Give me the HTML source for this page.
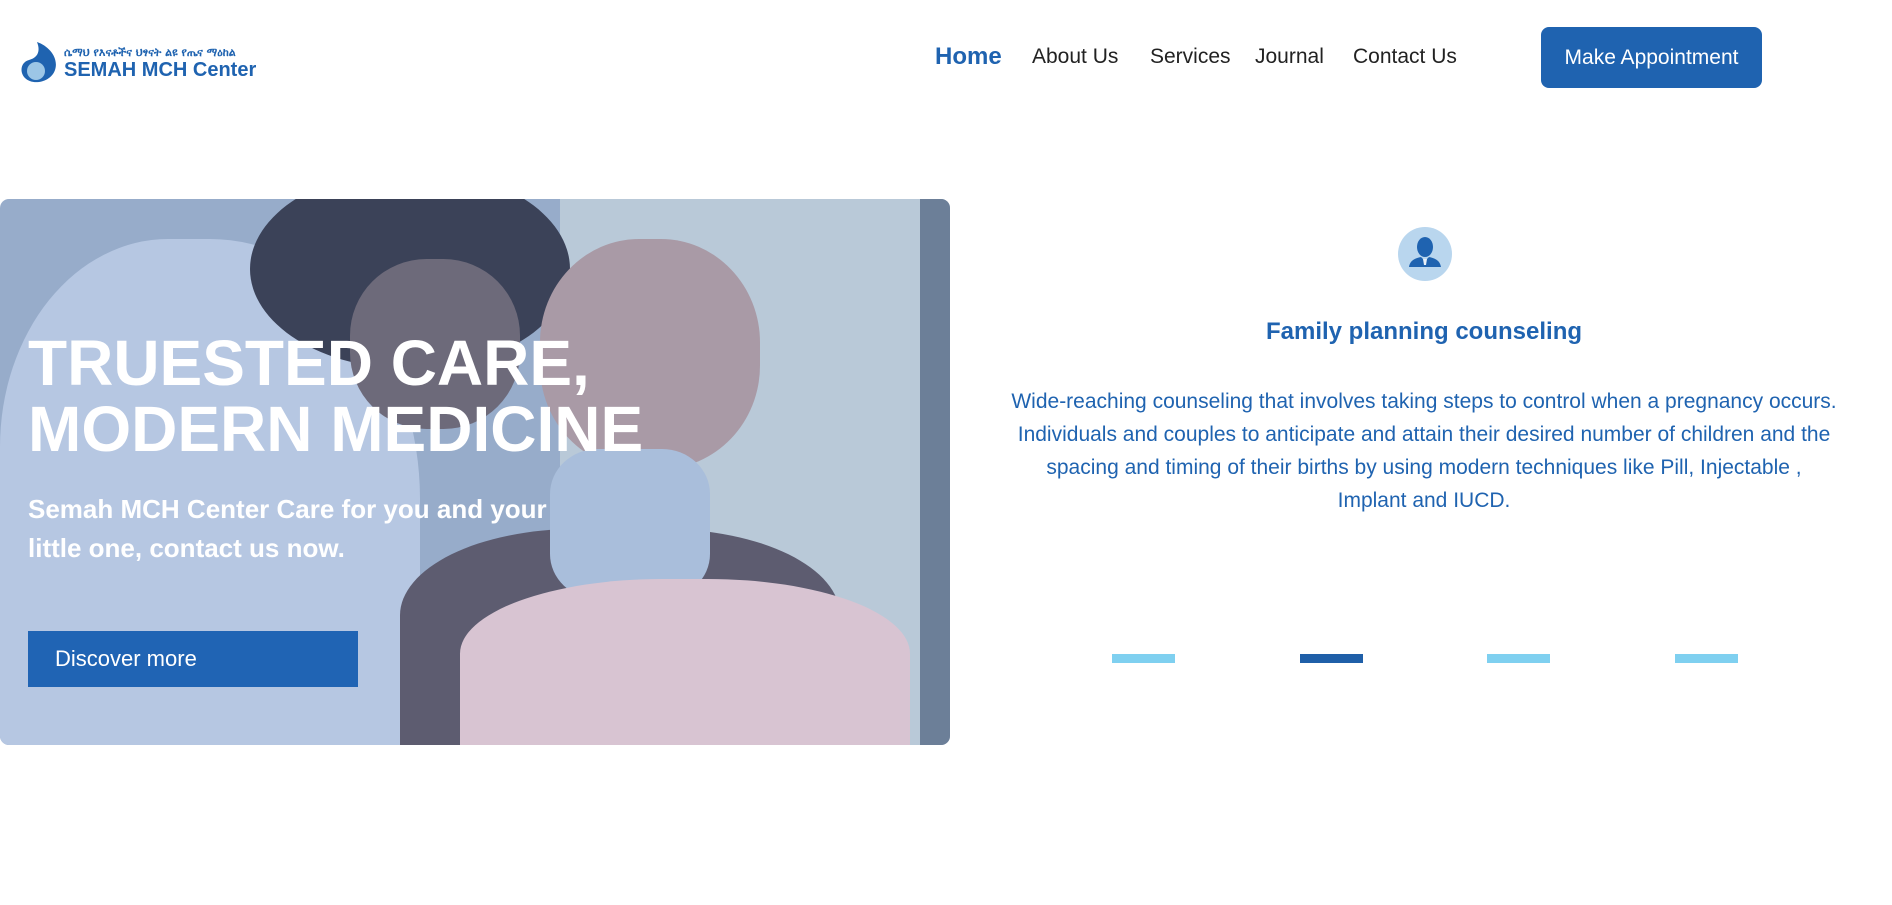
<!DOCTYPE html>
<html><head><meta charset="utf-8"><style>
*{margin:0;padding:0;box-sizing:border-box}
body{width:1892px;height:905px;background:#fff;font-family:"Liberation Sans","DejaVu Sans",sans-serif;position:relative;overflow:hidden}
.a{position:absolute}
.nav{top:45px;font-size:21px;color:#222;white-space:nowrap}
.hero{left:0;top:199px;width:950px;height:546px;border-radius:9px;overflow:hidden;background:#97acca}
.dash{top:654px;width:63px;height:9px;background:#7fd0f0}
</style></head><body>
<svg class="a" style="left:19px;top:40px" width="40" height="44" viewBox="0 0 40 44">
<path d="M18 2 C30 6 40 18 36 30 C32 42 14 46 6 38 C0 32 2 22 10 20 C18 18 22 12 18 2Z" fill="#1f63b0"/>
<circle cx="17" cy="31" r="9" fill="#9cc6e6"/>
</svg>
<div class="a" style="left:64px;top:46px;font-size:11px;color:#1f63b0;font-weight:bold;font-family:'DejaVu Sans',sans-serif;white-space:nowrap">ሴማህ የእናቶችና ህፃናት ልዩ የጤና ማዕከል</div>
<div class="a" style="left:64px;top:59px;font-size:20px;color:#1f63b0;font-weight:900;white-space:nowrap">SEMAH MCH Center</div>

<div class="a nav" style="left:935px;top:43px;font-size:24px;font-weight:bold;color:#1f63b0">Home</div>
<div class="a nav" style="left:1032px">About Us</div>
<div class="a nav" style="left:1150px">Services</div>
<div class="a nav" style="left:1255px">Journal</div>
<div class="a nav" style="left:1353px">Contact Us</div>
<div class="a" style="left:1541px;top:27px;width:221px;height:61px;background:#1f63b0;border-radius:8px;color:#fff;font-size:21px;line-height:61px;text-align:center">Make Appointment</div>

<div class="a hero">
 <div class="a" style="left:560px;top:0;width:390px;height:546px;background:#b9c9d8"></div>
 <div class="a" style="left:0;top:40px;width:420px;height:520px;background:#b6c7e2;border-radius:40% 50% 0 0"></div>
 <div class="a" style="left:250px;top:-30px;width:320px;height:200px;background:#3b4258;border-radius:50%"></div>
 <div class="a" style="left:350px;top:60px;width:170px;height:170px;background:#6d6a7a;border-radius:45%"></div>
 <div class="a" style="left:540px;top:40px;width:220px;height:230px;background:#a99aa6;border-radius:45%"></div>
 <div class="a" style="left:400px;top:330px;width:440px;height:216px;background:#5d5c70;border-radius:40% 40% 0 0"></div>
 <div class="a" style="left:550px;top:250px;width:160px;height:150px;background:#a9bedb;border-radius:30%"></div>
 <div class="a" style="left:460px;top:380px;width:450px;height:166px;background:#d8c4d2;border-radius:45% 45% 0 0"></div>
 <div class="a" style="left:920px;top:0;width:30px;height:546px;background:#6c7f98"></div>
</div>

<div class="a" style="left:28px;top:330px;color:#fff;font-weight:bold;font-size:64px;line-height:66px;white-space:nowrap">TRUESTED CARE,<br>MODERN MEDICINE</div>
<div class="a" style="left:28px;top:490px;color:#fff;font-weight:bold;font-size:26px;line-height:39px;white-space:nowrap">Semah MCH Center Care for you and your<br>little one, contact us now.</div>
<div class="a" style="left:28px;top:631px;width:330px;height:56px;background:#2064b4;color:#fff;font-size:22px;line-height:56px;padding-left:27px">Discover more</div>

<div class="a" style="left:1398px;top:227px;width:54px;height:54px;border-radius:50%;background:#b9d6ee"></div>
<svg class="a" style="left:1398px;top:227px" width="54" height="54" viewBox="0 0 54 54">
<ellipse cx="27" cy="20" rx="8" ry="10" fill="#1f63b0"/>
<path d="M11 40 C12 33 18 31 23 30 L27 34 L31 30 C36 31 42 33 43 40Z" fill="#1f63b0"/>
<path d="M25 32 L29 32 L28 38 L26 38Z" fill="#e8f0f8"/>
</svg>
<div class="a" style="left:960px;width:928px;top:318px;text-align:center;font-size:24px;font-weight:bold;color:#1f63b0;white-space:nowrap">Family planning counseling</div>
<div class="a" style="left:960px;width:928px;top:385px;text-align:center;font-size:21px;line-height:33px;color:#1f63b0;white-space:nowrap">Wide-reaching counseling that involves taking steps to control when a pregnancy occurs.<br>Individuals and couples to anticipate and attain their desired number of children and the<br>spacing and timing of their births by using modern techniques like Pill, Injectable ,<br>Implant and IUCD.</div>

<div class="a dash" style="left:1112px"></div>
<div class="a dash" style="left:1300px;background:#1f5fa8"></div>
<div class="a dash" style="left:1487px"></div>
<div class="a dash" style="left:1675px"></div>
</body></html>
